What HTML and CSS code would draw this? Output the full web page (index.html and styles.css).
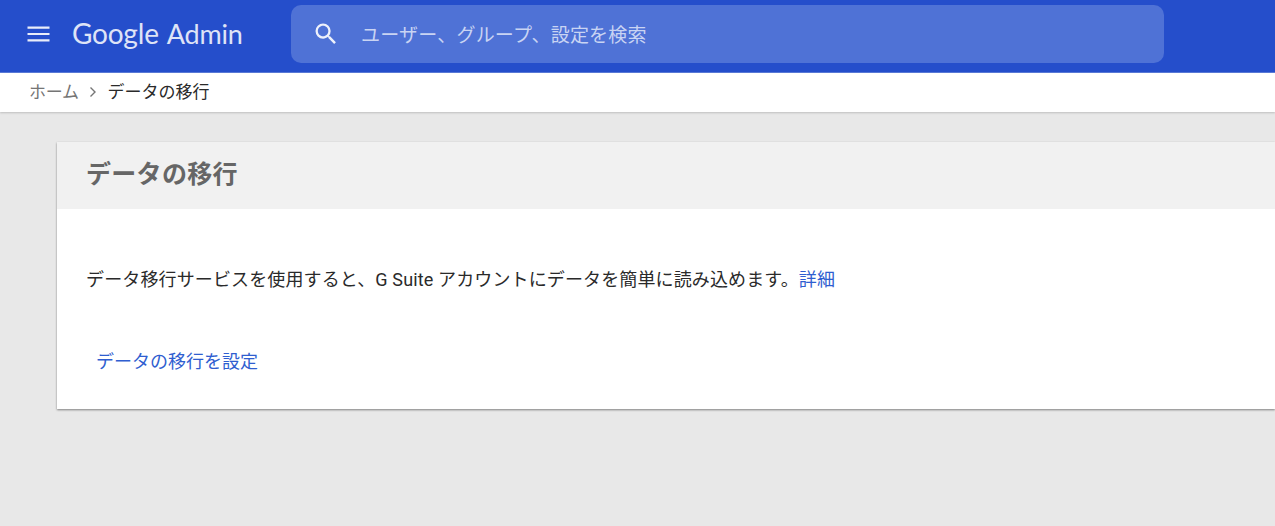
FILE: index.html
```
<!DOCTYPE html>
<html lang="ja">
<head>
<meta charset="utf-8">
<title>データの移行</title>
<link rel="stylesheet" href="styles.css">
</head>
<body>
<header class="topbar">
  <svg class="menu-icon" viewBox="0 0 22 16" aria-hidden="true"><path d="M0 0.500h22v2.200H0zM0 6.900h22v2.200H0zM0 13.300h22v2.200H0z" fill="#fff" fill-opacity=".9"/></svg>
  <div class="brand"><span class="brand-g">Google</span><span class="brand-a">Admin</span></div>
  <div class="search">
    <svg class="search-icon" viewBox="0 0 24 24" aria-hidden="true"><path d="M15.500 14h-.79l-.28-.27A6.470 6.470 0 0 0 16 9.500 6.500 6.500 0 1 0 9.500 16c1.610 0 3.090-.59 4.230-1.570l.27.28v.79l5 4.990L20.490 19l-4.990-5zm-6 0C7.010 14 5 11.990 5 9.500S7.010 5 9.500 5 14 7.010 14 9.500 11.990 14 9.500 14z" fill="#fff" fill-opacity=".9"/></svg>
    <span class="search-text">ユーザー、グループ、設定を検索</span>
  </div>
</header>
<nav class="crumbs">
  <span class="crumb-home">ホーム</span>
  <svg class="crumb-sep" viewBox="0 0 8 12" aria-hidden="true"><path d="M1.500 1.500 6 6l-4.500 4.500" fill="none" stroke="#757575" stroke-width="1.400"/></svg>
  <span class="crumb-current">データの移行</span>
</nav>
<main class="content">
  <section class="card">
    <h1 class="card-title">データの移行</h1>
    <div class="card-body">
      <p class="desc">データ移行サービスを使用すると、G Suite アカウントにデータを簡単に読み込めます。<a class="link" href="#">詳細</a></p>
      <a class="link action" href="#">データの移行を設定</a>
    </div>
  </section>
</main>
</body>
</html>
```
FILE: styles.css
```
* { box-sizing: border-box; }
html, body { margin: 0; height: 100%; }
body {
  background: #e8e8e8;
  font-family: Roboto, "Noto Sans CJK JP", sans-serif;
  overflow: hidden;
}
.topbar {
  height: 73px;
  background: #254ecb;
  border-bottom: 1px solid #5b7bd8;
  display: flex;
  align-items: center;
  padding-left: 27px;
}
.menu-icon { width: 23px; height: 16px; flex: none; margin-top: -5px; }
.brand {
  margin: -5px 0 0 22px;
  width: 219px;
  color: #fff;
  opacity: .85;
  white-space: nowrap;
  line-height: 30px;
  display: flex;
  align-items: baseline;
  gap: 8px;
}
.brand-g { font-family: Lato, sans-serif; font-size: 28px; letter-spacing: -0.2px; }
.brand-a { font-family: Lato, sans-serif; font-size: 27px; letter-spacing: -0.2px; }
.search {
  width: 873px;
  height: 58px;
  margin-top: -4px;
  background: #4f72d6;
  border-radius: 10px;
  display: flex;
  align-items: center;
  padding-left: 21px;
}
.search-icon { width: 28px; height: 28px; flex: none; }
.search-text {
  margin: -2px 0 0 21px;
  color: #c9d4f3;
  font-size: 19px;
  letter-spacing: .2px;
}
.crumbs {
  height: 39px;
  background: #fff;
  display: flex;
  align-items: center;
  padding: 0 0 4px 29px;
  font-size: 17px;
  box-shadow: 0 1px 2px rgba(0,0,0,.18);
}
.crumb-home { color: #757575; letter-spacing: -.3px; }
.crumb-sep { width: 8px; height: 12px; margin: 3px 11px 0 10px; }
.crumb-current { color: #2a2a2a; }
.content { padding: 30px 0 0 57px; }
.card {
  width: 1218px;
  height: 267px;
  background: #fff;
  box-shadow: 0 1px 2px rgba(0,0,0,.45);
}
.card-title {
  margin: 0;
  height: 67px;
  background: #f1f1f1;
  color: #666;
  font-size: 25px;
  font-weight: 700;
  letter-spacing: .3px;
  line-height: 66px;
  padding-left: 29px;
}
.card-body { padding: 59px 0 0 29px; }
.desc {
  margin: 0;
  color: #2a2a2a;
  font-size: 18px;
  letter-spacing: .13px;
  line-height: 24px;
  white-space: nowrap;
}
.link { color: #2f5ed0; text-decoration: none; }
.action {
  display: block;
  margin: 58px 0 0 10px;
  font-size: 18px;
  line-height: 24px;
}
```
